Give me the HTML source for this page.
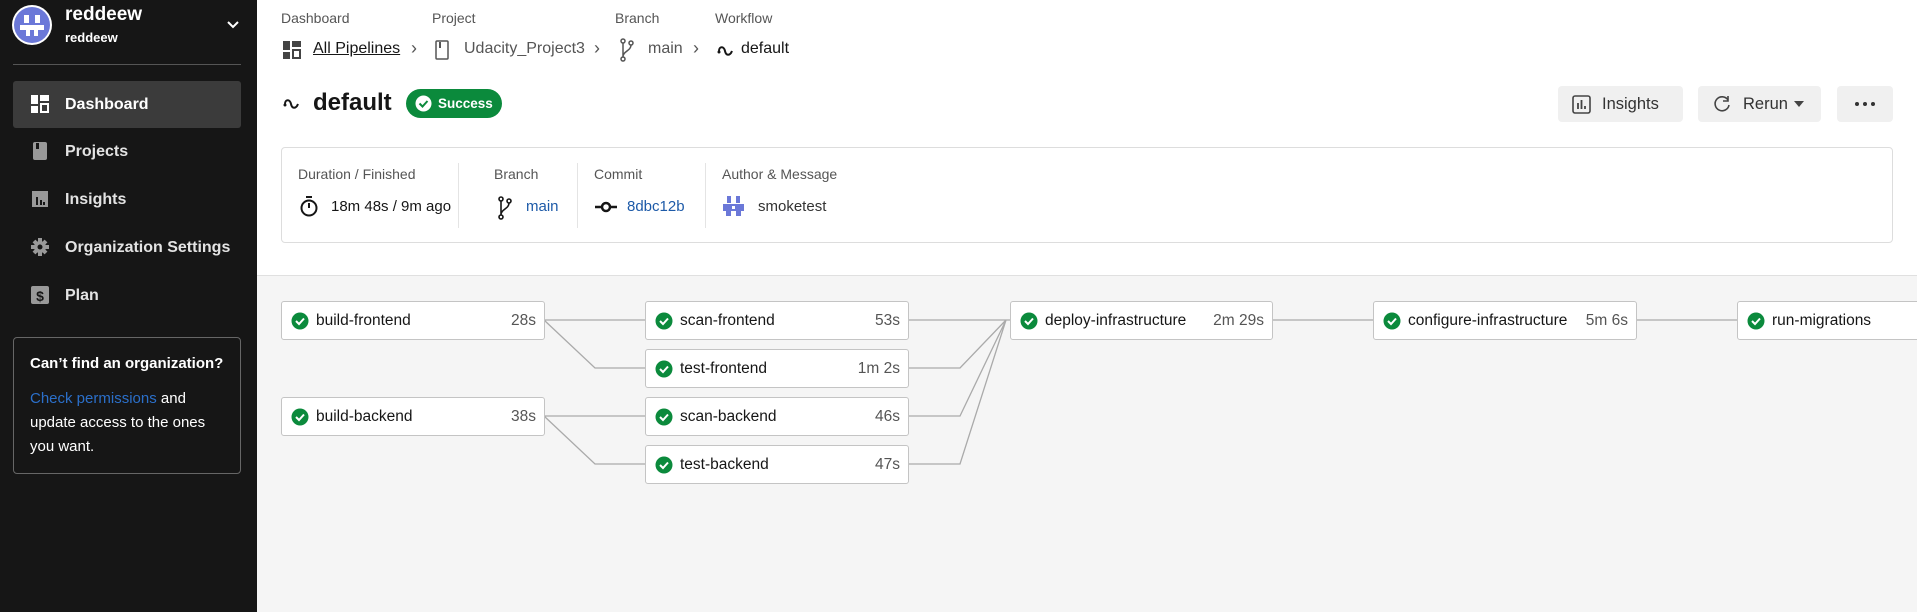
<!DOCTYPE html>
<html><head><meta charset="utf-8"><style>
*{margin:0;padding:0;box-sizing:border-box}
body{width:1917px;height:612px;overflow:hidden;font-family:"Liberation Sans",sans-serif;background:#fff;position:relative;color:#161616}
.a{position:absolute;white-space:nowrap}
#sb{position:absolute;left:0;top:0;width:257px;height:612px;background:#161616;color:#fff}
.nav{position:absolute;left:13px;width:228px;height:47px;color:#e3e3e3;font-weight:bold;font-size:16px;line-height:47px;padding-left:52px}
.nav.act{background:#3b3b3b;border-radius:3px;color:#fff}
.ic{position:absolute;left:18px;top:14px;width:18px;height:18px}
.lbl{font-size:14px;color:#555}
.job{position:absolute;height:39px;background:#fff;border:1px solid #c4c4c4;border-radius:3px;font-size:15.5px;line-height:37px;color:#161616}
.job .chk{position:absolute;left:9px;top:10px}
.job .n{position:absolute;left:34px}
.job .t{position:absolute;right:8px;color:#555}
.btn{position:absolute;top:86px;height:36px;background:#f0f0f0;border-radius:4px;font-size:16.5px;line-height:36px;color:#333}
</style></head><body>
<div id="sb">
  <svg class="a" style="left:12px;top:5px" width="40" height="40" viewBox="0 0 40 40"><circle cx="20" cy="20" r="20" fill="#fff"/><circle cx="20" cy="20" r="18" fill="#6b78d8"/><rect x="12" y="10" width="5" height="8" fill="#fff"/><rect x="23" y="10" width="5" height="8" fill="#fff"/><rect x="8" y="20" width="24" height="5" fill="#fff"/><rect x="14" y="25" width="4" height="6" fill="#fff"/><rect x="22" y="25" width="4" height="6" fill="#fff"/></svg>
  <div class="a" style="left:65px;top:4px;font-size:19px;font-weight:bold">reddeew</div>
  <div class="a" style="left:65px;top:30px;font-size:13px;font-weight:bold">reddeew</div>
  <svg class="a" style="left:226px;top:20px" width="14" height="10" viewBox="0 0 14 10"><path d="M2 2l5 5 5-5" stroke="#fff" stroke-width="2" fill="none"/></svg>
  <div class="a" style="left:13px;top:64px;width:228px;height:1px;background:#555"></div>
  <div class="nav act" style="top:81px"><svg class="ic" viewBox="0 0 18 18"><rect x="0" y="0" width="7" height="9" fill="#fff"/><rect x="0" y="11" width="7" height="7" fill="#fff"/><rect x="9" y="0" width="9" height="6" fill="#fff"/><rect x="10" y="9" width="7" height="8" fill="none" stroke="#fff" stroke-width="2"/></svg>Dashboard</div>
  <div class="nav" style="top:128px"><svg class="ic" viewBox="0 0 18 18"><rect x="2" y="0" width="14" height="18" rx="2" fill="#999"/><rect x="5" y="1" width="3" height="6" fill="#161616"/></svg>Projects</div>
  <div class="nav" style="top:176px"><svg class="ic" viewBox="0 0 18 18"><rect x="1" y="1" width="16" height="16" fill="#999"/><rect x="5" y="7" width="2" height="8" fill="#161616"/><rect x="9" y="10" width="2" height="5" fill="#161616"/><rect x="12" y="12" width="2" height="3" fill="#161616"/></svg>Insights</div>
  <div class="nav" style="top:224px"><svg class="ic" viewBox="0 0 18 18"><circle cx="9" cy="9" r="6" fill="#999"/><g stroke="#999" stroke-width="4"><path d="M9 0v18M0 9h18M3 3l12 12M15 3L3 15"/></g><circle cx="9" cy="9" r="2.5" fill="#161616"/></svg>Organization Settings</div>
  <div class="nav" style="top:272px"><svg class="ic" viewBox="0 0 18 18"><rect x="0" y="0" width="18" height="18" rx="2" fill="#999"/><text x="9" y="15" font-size="14" font-weight="bold" text-anchor="middle" fill="#161616" font-family="Liberation Sans">$</text></svg>Plan</div>
  <div class="a" style="left:13px;top:337px;width:228px;height:137px;border:1px solid #666;border-radius:4px"></div>
  <div class="a" style="left:30px;top:355px;font-size:15px;font-weight:bold">Can’t find an organization?</div>
  <div class="a" style="left:30px;top:387px;font-size:15px;line-height:24px;white-space:normal;width:200px"><span style="color:#2b6fc9">Check permissions</span> and update access to the ones you want.</div>
</div>

<div class="a lbl" style="left:281px;top:10px">Dashboard</div>
<div class="a lbl" style="left:432px;top:10px">Project</div>
<div class="a lbl" style="left:615px;top:10px">Branch</div>
<div class="a lbl" style="left:715px;top:10px">Workflow</div>
<svg class="a" style="left:283px;top:41px" width="18" height="18" viewBox="0 0 18 18"><rect x="0" y="0" width="7" height="9" fill="#444"/><rect x="0" y="11" width="7" height="7" fill="#444"/><rect x="9" y="0" width="9" height="6" fill="#444"/><rect x="10" y="9" width="7" height="8" fill="none" stroke="#444" stroke-width="2"/></svg>
<div class="a" style="left:313px;top:40px;font-size:16px;text-decoration:underline;color:#161616">All Pipelines</div>
<div class="a" style="left:411px;top:38px;font-size:18px;color:#555">›</div>
<svg class="a" style="left:435px;top:40px" width="14" height="20" viewBox="0 0 14 20"><rect x="1" y="1" width="12" height="18" rx="1" fill="none" stroke="#555" stroke-width="1.5"/><rect x="4" y="2" width="2" height="6" fill="#555"/></svg>
<div class="a" style="left:464px;top:40px;font-size:16px;color:#555">Udacity_Project3</div>
<div class="a" style="left:594px;top:38px;font-size:18px;color:#555">›</div>
<svg class="a" style="left:620px;top:38px" width="14" height="24" viewBox="0 0 14 24"><g fill="none" stroke="#555" stroke-width="1.5"><circle cx="3" cy="3" r="2"/><circle cx="11" cy="5" r="2"/><circle cx="3" cy="21" r="2"/><path d="M3 5v14M11 7c0 6-8 6-8 12"/></g></svg>
<div class="a" style="left:648px;top:40px;font-size:16px;color:#555">main</div>
<div class="a" style="left:693px;top:38px;font-size:18px;color:#555">›</div>
<svg class="a" style="left:717px;top:42px" width="18" height="14" viewBox="0 0 18 14"><path d="M2 9c0-5 5-5 6 0s5 5 7 0" fill="none" stroke="#161616" stroke-width="2"/><circle cx="2" cy="10" r="1.5" fill="#161616"/></svg>
<div class="a" style="left:741px;top:40px;font-size:16px">default</div>

<svg class="a" style="left:282px;top:95px" width="20" height="14" viewBox="0 0 18 14"><path d="M2 9c0-5 5-5 6 0s5 5 7 0" fill="none" stroke="#161616" stroke-width="2"/><circle cx="2" cy="10" r="1.5" fill="#161616"/></svg>
<div class="a" style="left:313px;top:89px;font-size:24px;font-weight:bold">default</div>
<div class="a" style="left:406px;top:89px;width:96px;height:29px;border-radius:15px;background:#0b8a3c;color:#fff;font-size:13.5px;font-weight:bold;line-height:29px;padding-left:32px">Success
<svg style="position:absolute;left:9px;top:6px" width="17" height="17" viewBox="0 0 17 17"><circle cx="8.5" cy="8.5" r="8" fill="#fff"/><path d="M4.5 8.5l3 3 5-5.5" stroke="#0b8a3c" stroke-width="2" fill="none"/></svg></div>

<div class="btn" style="left:1558px;width:125px;padding-left:44px">Insights<svg style="position:absolute;left:14px;top:9px" width="19" height="19" viewBox="0 0 19 19"><rect x="1" y="1" width="17" height="17" rx="2" fill="none" stroke="#444" stroke-width="1.6"/><path d="M6 8v6M9.5 5v9M13 11v3" stroke="#444" stroke-width="1.8"/></svg></div>
<div class="btn" style="left:1698px;width:123px;padding-left:45px">Rerun<svg style="position:absolute;left:15px;top:9px" width="18" height="18" viewBox="0 0 18 18"><path d="M15 5A7 7 0 1 0 16 10" fill="none" stroke="#444" stroke-width="1.6"/><path d="M15 1v5h-5" fill="none" stroke="#444" stroke-width="1.6"/></svg><svg style="position:absolute;left:96px;top:15px" width="10" height="6"><path d="M0 0h10L5 6z" fill="#444"/></svg></div>
<div class="btn" style="left:1837px;width:56px"><svg style="position:absolute;left:18px;top:16px" width="20" height="4"><circle cx="2" cy="2" r="2" fill="#333"/><circle cx="10" cy="2" r="2" fill="#333"/><circle cx="18" cy="2" r="2" fill="#333"/></svg></div>

<div class="a" style="left:281px;top:147px;width:1612px;height:96px;border:1px solid #ddd;border-radius:4px"></div>
<div class="a lbl" style="left:298px;top:166px">Duration / Finished</div>
<div class="a lbl" style="left:494px;top:166px">Branch</div>
<div class="a lbl" style="left:594px;top:166px">Commit</div>
<div class="a lbl" style="left:722px;top:166px">Author &amp; Message</div>
<div class="a" style="left:458px;top:163px;width:1px;height:65px;background:#e4e4e4"></div>
<div class="a" style="left:577px;top:163px;width:1px;height:65px;background:#e4e4e4"></div>
<div class="a" style="left:705px;top:163px;width:1px;height:65px;background:#e4e4e4"></div>
<svg class="a" style="left:299px;top:195px" width="20" height="22" viewBox="0 0 20 22"><circle cx="10" cy="13" r="7.5" fill="none" stroke="#161616" stroke-width="2"/><path d="M7 2h6M10 8v5" stroke="#161616" stroke-width="2"/></svg>
<div class="a" style="left:331px;top:198px;font-size:15px">18m 48s / 9m ago</div>
<svg class="a" style="left:498px;top:196px" width="14" height="24" viewBox="0 0 14 24"><g fill="none" stroke="#161616" stroke-width="1.6"><circle cx="3" cy="3" r="2"/><circle cx="11" cy="5" r="2"/><circle cx="3" cy="21" r="2"/><path d="M3 5v14M11 7c0 6-8 6-8 12"/></g></svg>
<div class="a" style="left:526px;top:198px;font-size:15px;color:#1d5aa8">main</div>
<svg class="a" style="left:595px;top:200px" width="22" height="14" viewBox="0 0 22 14"><path d="M0 7h22" stroke="#161616" stroke-width="2.5"/><circle cx="11" cy="7" r="4" fill="#fff" stroke="#161616" stroke-width="2.5"/></svg>
<div class="a" style="left:627px;top:198px;font-size:15px;color:#1d5aa8">8dbc12b</div>
<svg class="a" style="left:723px;top:195px" width="21" height="22" viewBox="0 0 21 22"><g fill="#6b78d8"><rect x="4" y="1" width="4" height="7"/><rect x="13" y="1" width="4" height="7"/><rect x="0" y="9" width="21" height="7"/><rect x="3" y="16" width="5" height="5"/><rect x="13" y="16" width="5" height="5"/></g><rect x="9" y="11" width="3" height="3" fill="#fff"/></svg>
<div class="a" style="left:758px;top:198px;font-size:15px;color:#333">smoketest</div>

<div class="a" style="left:257px;top:275px;width:1660px;height:337px;background:#f5f5f5;border-top:1px solid #e0e0e0"></div>
<svg class="a" style="left:257px;top:275px" width="1660" height="337"><g stroke="#aaa" stroke-width="1.3" fill="none">
<path d="M287 45H388M287 45L338 93H388M287 141H388M287 141L338 189H388"/>
<path d="M651 45H753M651 93H703L749 45M651 141H703L749 45M651 189H703L749 45"/>
<path d="M1015 45H1116M1379 45H1480"/>
</g></svg>

<div class="job" style="left:281px;top:301px;width:264px"><svg class="chk" width="18" height="18" viewBox="0 0 18 18"><circle cx="9" cy="9" r="8.5" fill="#0b8a3c"/><path d="M5 9l3 3 5-5.5" stroke="#fff" stroke-width="2" fill="none"/></svg><span class="n">build-frontend</span><span class="t">28s</span></div>
<div class="job" style="left:281px;top:397px;width:264px"><svg class="chk" width="18" height="18" viewBox="0 0 18 18"><circle cx="9" cy="9" r="8.5" fill="#0b8a3c"/><path d="M5 9l3 3 5-5.5" stroke="#fff" stroke-width="2" fill="none"/></svg><span class="n">build-backend</span><span class="t">38s</span></div>
<div class="job" style="left:645px;top:301px;width:264px"><svg class="chk" width="18" height="18" viewBox="0 0 18 18"><circle cx="9" cy="9" r="8.5" fill="#0b8a3c"/><path d="M5 9l3 3 5-5.5" stroke="#fff" stroke-width="2" fill="none"/></svg><span class="n">scan-frontend</span><span class="t">53s</span></div>
<div class="job" style="left:645px;top:349px;width:264px"><svg class="chk" width="18" height="18" viewBox="0 0 18 18"><circle cx="9" cy="9" r="8.5" fill="#0b8a3c"/><path d="M5 9l3 3 5-5.5" stroke="#fff" stroke-width="2" fill="none"/></svg><span class="n">test-frontend</span><span class="t">1m 2s</span></div>
<div class="job" style="left:645px;top:397px;width:264px"><svg class="chk" width="18" height="18" viewBox="0 0 18 18"><circle cx="9" cy="9" r="8.5" fill="#0b8a3c"/><path d="M5 9l3 3 5-5.5" stroke="#fff" stroke-width="2" fill="none"/></svg><span class="n">scan-backend</span><span class="t">46s</span></div>
<div class="job" style="left:645px;top:445px;width:264px"><svg class="chk" width="18" height="18" viewBox="0 0 18 18"><circle cx="9" cy="9" r="8.5" fill="#0b8a3c"/><path d="M5 9l3 3 5-5.5" stroke="#fff" stroke-width="2" fill="none"/></svg><span class="n">test-backend</span><span class="t">47s</span></div>
<div class="job" style="left:1010px;top:301px;width:263px"><svg class="chk" width="18" height="18" viewBox="0 0 18 18"><circle cx="9" cy="9" r="8.5" fill="#0b8a3c"/><path d="M5 9l3 3 5-5.5" stroke="#fff" stroke-width="2" fill="none"/></svg><span class="n">deploy-infrastructure</span><span class="t">2m 29s</span></div>
<div class="job" style="left:1373px;top:301px;width:264px"><svg class="chk" width="18" height="18" viewBox="0 0 18 18"><circle cx="9" cy="9" r="8.5" fill="#0b8a3c"/><path d="M5 9l3 3 5-5.5" stroke="#fff" stroke-width="2" fill="none"/></svg><span class="n">configure-infrastructure</span><span class="t">5m 6s</span></div>
<div class="job" style="left:1737px;top:301px;width:200px"><svg class="chk" width="18" height="18" viewBox="0 0 18 18"><circle cx="9" cy="9" r="8.5" fill="#0b8a3c"/><path d="M5 9l3 3 5-5.5" stroke="#fff" stroke-width="2" fill="none"/></svg><span class="n">run-migrations</span></div>
</body></html>
